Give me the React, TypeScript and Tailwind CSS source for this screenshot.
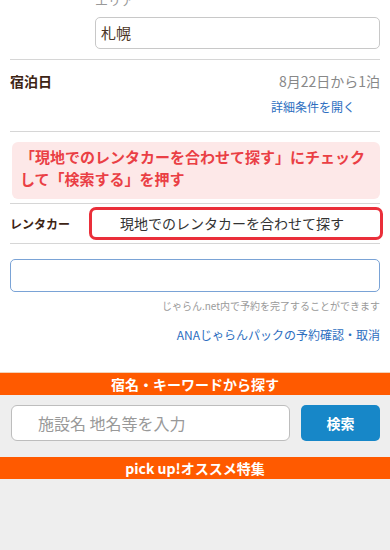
import React from 'react';

export default function App() {
    return (
        <div className="w-[390px] h-[550px] overflow-hidden bg-[#eeeeee] font-['Noto_Sans_CJK_JP',sans-serif]">
            <div className="bg-white px-[10px] pb-[28px]">
                {/* area */}
                <div className="pl-[85px] border-b border-[#d6d6d6] pb-[10px]">
                    <div className="-mt-[9px] h-[26px] text-[13px] leading-[18px] text-[#999]">エリア</div>
                    <div className="h-[32px] border border-[#c8c8c8] rounded-[5px] flex items-center px-[5px] text-[15px] text-[#4a3424]">札幌</div>
                </div>

                {/* stay */}
                <div className="border-b border-[#d6d6d6] h-[72px]">
                    <div className="flex justify-between items-center pt-[11px]">
                        <span className="text-[14px] font-bold text-[#3d2414]">宿泊日</span>
                        <span className="text-[14px] text-[#888]">8月22日から1泊</span>
                    </div>
                    <div className="text-right pr-[25px] mt-[6px] text-[12px] text-[#2d6ec0]">詳細条件を開く</div>
                </div>

                {/* note */}
                <div className="ml-[2px] mt-[10px] h-[57px] rounded-[6px] bg-[#fde8e8] pl-[8px] pt-[4px] text-[15px] leading-[22px] font-bold text-[#ea3f45] whitespace-nowrap">
                    「現地でのレンタカーを合わせて探す」にチェック<br />して「検索する」を押す
                </div>

                {/* rental car */}
                <div className="mt-[4px] border-t border-b border-[#d6d6d6] h-[41px] flex items-center">
                    <span className="w-[79px] text-[12px] font-bold text-[#3d2414]">レンタカー</span>
                    <div className="w-[294px] h-[33px] -mr-[3px] border-[3px] border-[#ea2f3a] rounded-[7px] flex items-center pl-[28px] text-[14px] text-[#333]">
                        現地でのレンタカーを合わせて探す
                    </div>
                </div>

                <div className="mt-[15px] h-[33px] border border-[#7aa3d6] rounded-[5px]"></div>

                <div className="text-right mt-[6px] text-[10px] text-[#9a9a9a]">じゃらん.net内で予約を完了することができます</div>
                <div className="text-right mt-[13px] text-[12px] text-[#2d6ec0]">ANAじゃらんパックの予約確認・取消</div>
            </div>

            <div className="border-t border-[#f3d3b8] bg-[#ff5a00] h-[23px] flex items-center justify-center text-[14px] font-bold text-white">宿名・キーワードから探す</div>

            <div className="flex gap-[11px] px-[10px] pt-[10px] pb-[16px]">
                <div className="flex-1 ml-[1px] h-[36px] bg-white border border-[#bdbdbd] rounded-[6px] flex items-center pl-[26px] text-[16px] text-[#999]">施設名 地名等を入力</div>
                <button className="w-[79px] h-[36px] bg-[#1787c8] rounded-[5px] text-white text-[14px] font-bold">検索</button>
            </div>

            <div className="bg-[#ff5a00] h-[22px] flex items-center justify-center text-[14px] font-bold text-white">pick up!オススメ特集</div>
        </div>
    );
}
